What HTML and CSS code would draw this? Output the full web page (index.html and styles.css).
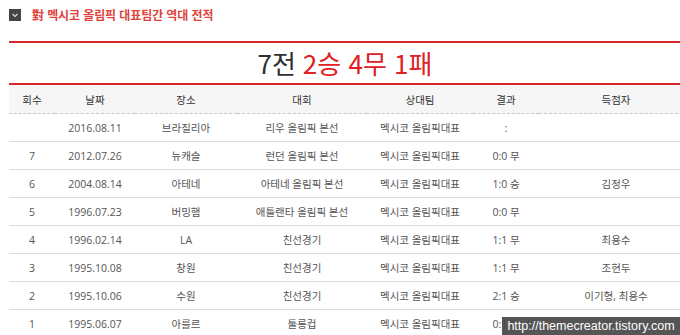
FILE: index.html
```html
<!DOCTYPE html>
<html lang="ko">
<head>
<meta charset="utf-8">
<title>對 멕시코 올림픽 대표팀간 역대 전적</title>
<link rel="stylesheet" href="styles.css">
</head>
<body>
<div class="page">
  <h2 class="title">
    <span class="toggle"><svg width="12" height="12" viewBox="0 0 12 12"><path d="M3.5 5 L6 7.5 L8.5 5" fill="none" stroke="#ddd" stroke-width="1.2"/></svg></span>
    <span>對 멕시코 올림픽 대표팀간 역대 전적</span>
  </h2>
  <div class="board">
    <div class="summary"><span class="dark">7전</span> <span class="red">2승 4무 1패</span></div>
    <table class="record">
      <colgroup>
        <col class="c1"><col class="c2"><col class="c3"><col class="c4"><col class="c5"><col class="c6"><col class="c7">
      </colgroup>
      <thead>
        <tr><th>회수</th><th>날짜</th><th>장소</th><th>대회</th><th>상대팀</th><th>결과</th><th>득점자</th></tr>
      </thead>
      <tbody>
        <tr><td></td><td>2016.08.11</td><td>브라질리아</td><td>리우 올림픽 본선</td><td>멕시코 올림픽대표</td><td>:</td><td></td></tr>
        <tr><td>7</td><td>2012.07.26</td><td>뉴캐슬</td><td>런던 올림픽 본선</td><td>멕시코 올림픽대표</td><td>0:0 무</td><td></td></tr>
        <tr><td>6</td><td>2004.08.14</td><td>아테네</td><td>아테네 올림픽 본선</td><td>멕시코 올림픽대표</td><td>1:0 승</td><td>김정우</td></tr>
        <tr><td>5</td><td>1996.07.23</td><td>버밍햄</td><td>애틀랜타 올림픽 본선</td><td>멕시코 올림픽대표</td><td>0:0 무</td><td></td></tr>
        <tr><td>4</td><td>1996.02.14</td><td>LA</td><td>친선경기</td><td>멕시코 올림픽대표</td><td>1:1 무</td><td>최용수</td></tr>
        <tr><td>3</td><td>1995.10.08</td><td>창원</td><td>친선경기</td><td>멕시코 올림픽대표</td><td>1:1 무</td><td>조현두</td></tr>
        <tr><td>2</td><td>1995.10.06</td><td>수원</td><td>친선경기</td><td>멕시코 올림픽대표</td><td>2:1 승</td><td>이기형, 최용수</td></tr>
        <tr><td>1</td><td>1995.06.07</td><td>아를르</td><td>툴롱컵</td><td>멕시코 올림픽대표</td><td>0:1 패</td><td></td></tr>
      </tbody>
    </table>
  </div>
  <div class="watermark">http://themecreator.tistory.com</div>
</div>
</body>
</html>
```

FILE: styles.css
```css
html, body {
  margin: 0;
  padding: 0;
  background: #fff;
  overflow: hidden;
}
.page {
  position: relative;
  width: 680px;
  height: 335px;
  overflow: hidden;
  font-family: "Open Sans", "Noto Sans CJK KR", sans-serif;
}
.title {
  margin: 0;
  height: 41px;
  padding: 9px 0 0 9px;
  box-sizing: border-box;
  display: flex;
  align-items: flex-start;
  gap: 11px;
  font-family: "Noto Sans CJK KR", sans-serif;
  font-size: 12px;
  line-height: 12px;
  font-weight: bold;
  color: #e0433c;
  letter-spacing: -0.1px;
}
.toggle {
  width: 12px;
  height: 12px;
  background: #444;
  display: block;
  flex: none;
}
.toggle svg { display: block; }
.board {
  margin-left: 9px;
  width: 684px;
  border-top: 2px solid #d8282c;
}
.summary {
  height: 40px;
  border-bottom: 2px solid #d8282c;
  display: flex;
  justify-content: center;
  align-items: center;
  gap: 7px;
  padding-right: 12px;
  font-family: "Noto Sans CJK KR", sans-serif;
  font-size: 26px;
  line-height: 40px;
}
.summary .dark { color: #2f2f2f; }
.summary .red { color: #dd2125; }
.record {
  width: 684px;
  table-layout: fixed;
  border-collapse: collapse;
  font-size: 10.5px;
  text-align: center;
}
.c1 { width: 46px; }
.c2 { width: 80px; }
.c3 { width: 102px; }
.c4 { width: 130px; }
.c5 { width: 106px; }
.c6 { width: 66px; }
.c7 { width: 154px; }
.record th {
  height: 28px;
  padding: 0;
  background: #f6f6f6;
  color: #333;
  font-weight: normal;
  border-bottom: 1px dashed #c8c8c8;
}
.record td {
  height: 27px;
  padding: 0;
  color: #555;
  border-bottom: 1px solid #dcdcdc;
}
.watermark {
  position: absolute;
  right: 0;
  bottom: 0;
  width: 178px;
  height: 18px;
  background: rgba(70, 70, 70, 0.92);
  color: #fff;
  font-family: "Liberation Sans", sans-serif;
  font-size: 12.5px;
  line-height: 18px;
  text-align: center;
  white-space: nowrap;
}
```
